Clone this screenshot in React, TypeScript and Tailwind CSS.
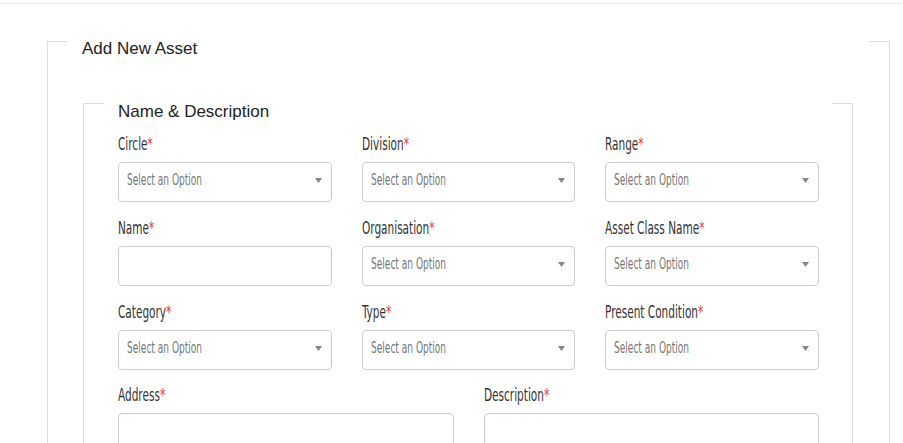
import type { ReactNode } from "react";

const condensed =
	"font-['DejaVu_Sans_Condensed','Liberation_Sans_Narrow','Roboto',sans-serif] [font-stretch:condensed]";

function Label({ children }: { children: ReactNode }) {
	return (
		<label
			className={`block pt-[2px] mb-[8px] text-[18px] leading-[20px] text-[#333] whitespace-nowrap ${condensed}`}
		>
			<span className="inline-block origin-left scale-x-[0.65]">
				{children}
				<span className="text-[#f03a3a]">*</span>
			</span>
		</label>
	);
}

function SelectBox({ label }: { label: string }) {
	return (
		<div>
			<Label>{label}</Label>
			<div className="flex h-[40px] items-center justify-between rounded-[4px] border border-[#cccccc] bg-white pl-[8px] pr-[9px]">
				<span
					className={`inline-block origin-left scale-x-[0.67] pb-[4px] text-[15px] whitespace-nowrap text-[#777] ${condensed}`}
				>
					Select an Option
				</span>
				<svg width="7" height="5" viewBox="0 0 7 5" aria-hidden className="mb-[4px]">
					<path d="M0 0h7L3.5 5z" fill="#888" />
				</svg>
			</div>
		</div>
	);
}

function TextBox({ label }: { label: string }) {
	return (
		<div>
			<Label>{label}</Label>
			<input
				type="text"
				className="block h-[40px] w-full rounded-[4px] border border-[#cccccc] bg-white px-[8px] outline-none"
			/>
		</div>
	);
}

export default function App() {
	return (
		<div className="h-[443px] overflow-hidden bg-white font-['Liberation_Sans',Arial,sans-serif]">
			<div className="h-[4px] border-b border-[#e6e6e6]" />
			<fieldset className="mt-[19px] ml-[47px] mr-[13px] border border-[#dddddd] px-[20px]">
				<legend className="w-full pl-[14px] pt-[16px] text-[17px] leading-[20px] text-[#222]">
					Add New Asset
				</legend>
				<fieldset className="mt-[26px] ml-[15px] mr-[16px] border border-[#dddddd] px-[20px]">
					<legend className="w-full pl-[14px] pt-[17px] text-[17px] leading-[20px] text-[#222]">
						Name &amp; Description
					</legend>
					<div className="pl-[14px] pr-[13px] pt-[10px]">
						<div className="grid grid-cols-3 gap-x-[30px] gap-y-[14px]">
							<SelectBox label="Circle" />
							<SelectBox label="Division" />
							<SelectBox label="Range" />
							<TextBox label="Name" />
							<SelectBox label="Organisation" />
							<SelectBox label="Asset Class Name" />
							<SelectBox label="Category" />
							<SelectBox label="Type" />
							<SelectBox label="Present Condition" />
						</div>
						<div className="mt-[13px] grid grid-cols-2 gap-x-[30px]">
							<TextBox label="Address" />
							<TextBox label="Description" />
						</div>
					</div>
				</fieldset>
			</fieldset>
		</div>
	);
}
